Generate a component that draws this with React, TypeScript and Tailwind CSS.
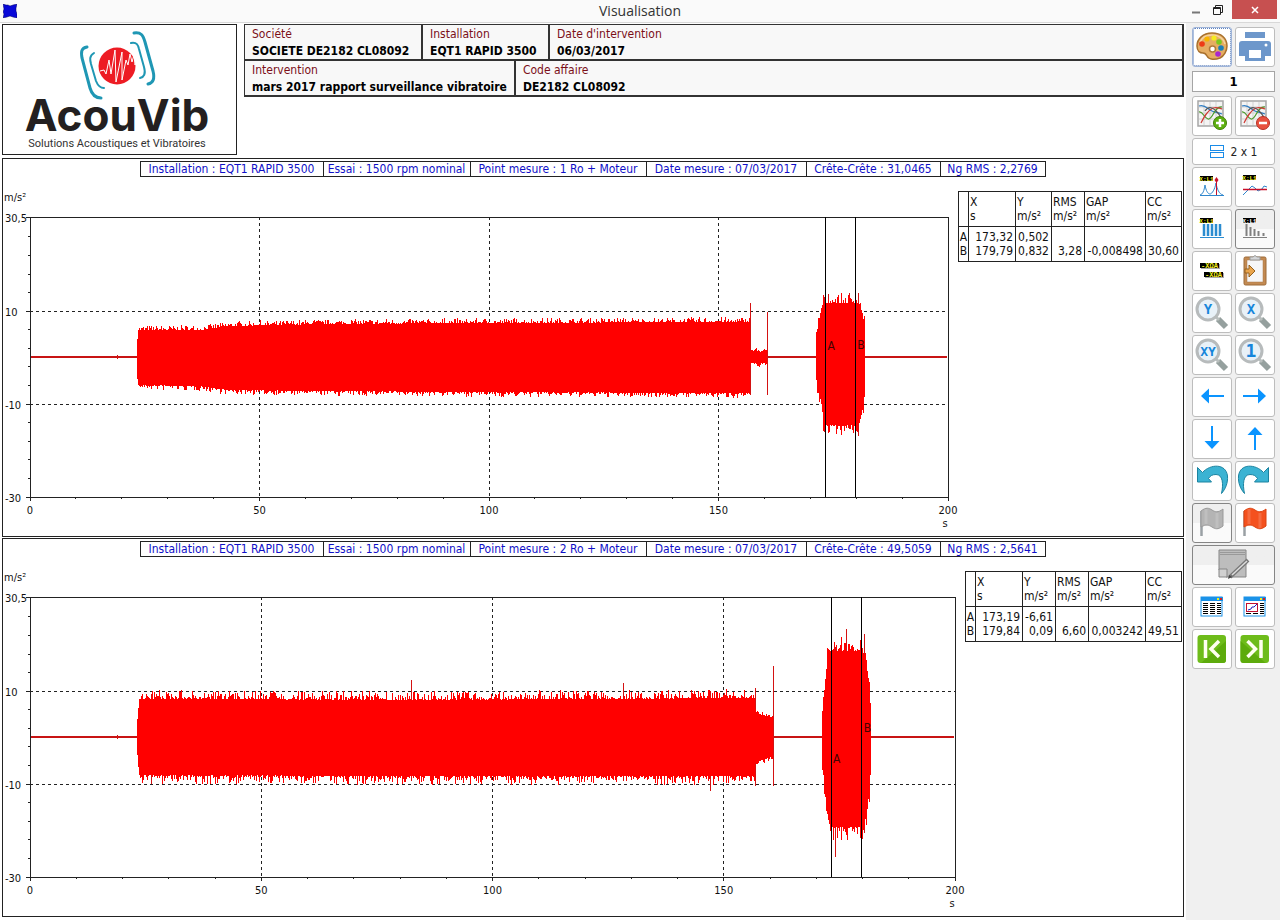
import type { ReactNode } from "react";
import clsx from "clsx";

const UI_FONT = "font-['DejaVu_Sans_Condensed','DejaVu_Sans',sans-serif]";

// Envelope points are [x, top, bottom] in plot units, zero line at ZERO
type Point = [number, number, number];

type Measure = {
  id: string;
  infos: string[];
  width: number;
  noise: number;
  seed: number;
  segments: Point[][];
  spikes: Point[];
  cursors: { name: string; at: number; labelY: number }[];
  columns: { title: string; unit: string; width: string; a: string; b: string }[];
};

const PLOT_HEIGHT = 280;
const ZERO = 141;

const INFO_WIDTHS = ["w-[184px]", "w-[148px]", "w-[177px]", "w-[161px]", "w-[135px]", "w-[106px]"];

const measures: Measure[] = [
  {
    id: "m1",
    infos: [
      "Installation : EQT1 RAPID 3500",
      "Essai : 1500 rpm nominal",
      "Point mesure : 1 Ro + Moteur",
      "Date mesure : 07/03/2017",
      "Crête-Crête : 31,0465",
      "Ng RMS : 2,2769",
    ],
    width: 918,
    noise: 5,
    seed: 7,
    segments: [
      [[107, 122, 158], [108, 113, 168], [170, 113, 169], [200, 109, 173], [300, 107, 174], [450, 106, 175], [720, 105, 176]],
      [[720, 134, 146], [737, 135, 146]],
      [[786, 122, 163], [788, 105, 176], [791, 94, 184], [792, 91, 195], [793, 86, 205], [795, 86, 208], [827, 86, 208], [829, 89, 206], [832, 96, 193], [834, 108, 180], [835, 122, 164]],
    ],
    spikes: [[720, 86, 178], [737, 95, 178], [819, 76, 212], [828, 76, 219], [794, 80, 215], [798, 77, 214], [87, 138, 142]],
    cursors: [
      { name: "A", at: 173.32, labelY: 133 },
      { name: "B", at: 179.79, labelY: 132 },
    ],
    columns: [
      { title: "X", unit: "s", width: "w-[47px]", a: "173,32", b: "179,79" },
      { title: "Y", unit: "m/s²", width: "w-[36px]", a: "0,502", b: "0,832" },
      { title: "RMS", unit: "m/s²", width: "w-[33px]", a: "", b: "3,28" },
      { title: "GAP", unit: "m/s²", width: "w-[61px]", a: "", b: "-0,008498" },
      { title: "CC", unit: "m/s²", width: "w-[36px]", a: "", b: "30,60" },
    ],
  },
  {
    id: "m2",
    infos: [
      "Installation : EQT1 RAPID 3500",
      "Essai : 1500 rpm nominal",
      "Point mesure : 2 Ro + Moteur",
      "Date mesure : 07/03/2017",
      "Crête-Crête : 49,5059",
      "Ng RMS : 2,5641",
    ],
    width: 925,
    noise: 9,
    seed: 23,
    segments: [
      [[107, 122, 158], [109, 102, 178], [400, 103, 179], [725, 101, 179]],
      [[725, 116, 165], [743, 121, 159]],
      [[792, 114, 168], [794, 96, 188], [796, 72, 208], [798, 58, 222], [800, 54, 230], [832, 54, 230], [835, 60, 220], [837, 76, 208], [839, 92, 192], [841, 120, 164]],
    ],
    spikes: [[725, 91, 189], [743, 69, 189], [381, 83, 184], [593, 86, 184], [816, 32, 236], [805, 50, 260], [834, 37, 236], [680, 94, 194], [121, 97, 187], [87, 138, 142]],
    cursors: [
      { name: "A", at: 173.19, labelY: 166 },
      { name: "B", at: 179.84, labelY: 135 },
    ],
    columns: [
      { title: "X", unit: "s", width: "w-[47px]", a: "173,19", b: "179,84" },
      { title: "Y", unit: "m/s²", width: "w-[33px]", a: "-6,61", b: "0,09" },
      { title: "RMS", unit: "m/s²", width: "w-[33px]", a: "", b: "6,60" },
      { title: "GAP", unit: "m/s²", width: "w-[57px]", a: "", b: "0,003242" },
      { title: "CC", unit: "m/s²", width: "w-[36px]", a: "", b: "49,51" },
    ],
  },
];

function createRandom(seed: number) {
  let s = seed;
  return () => {
    s = (s * 16807) % 2147483647;
    return s / 2147483647;
  };
}

// One column per unit: straight interpolation of the envelope plus some noise
function envelopePath(points: Point[], noise: number, random: () => number) {
  const top: string[] = [];
  const bottom: string[] = [];
  for (let i = 0; i < points.length - 1; i++) {
    const [x0, t0, b0] = points[i];
    const [x1, t1, b1] = points[i + 1];
    for (let x = x0; x < x1; x++) {
      const k = (x - x0) / (x1 - x0);
      const t = Math.round(t0 + (t1 - t0) * k - Math.pow(random(), 2.5) * noise);
      const b = Math.round(b0 + (b1 - b0) * k + Math.pow(random(), 2.5) * noise);
      top.push(`L${x} ${t}H${x + 1}`);
      bottom.unshift(`L${x + 1} ${b}H${x}`);
    }
  }
  return `M${points[0][0]} ${ZERO}${top.join("")}${bottom.join("")}Z`;
}

function Plot({ measure }: { measure: Measure }) {
  const random = createRandom(measure.seed);
  const noises = [measure.noise, 4, measure.noise + 5];
  const yTicks = [
    { label: "30,5", at: 0 },
    { label: "10", at: 33.6 },
    { label: "-10", at: 66.8 },
    { label: "-30", at: 100 },
  ];
  const minor = [26, 22, 18, 14, 6, 2, -2, -6, -14, -18, -22, -26].map((v) => ((30.3 - v) / 60.3) * 100);

  return (
    <svg
      role="img"
      aria-label={measure.infos[2]}
      className="min-w-0 flex-1 self-stretch overflow-visible"
      fontSize="11"
      fill="#111"
    >
      <text x="-26" y="-16">m/s²</text>
      <g stroke="#222" shapeRendering="crispEdges">
        <rect x="0" y="0" width="100%" height="100%" fill="none" />
        {yTicks.map((t) => (
          <line key={t.label} x1="-4" x2="0" y1={`${t.at}%`} y2={`${t.at}%`} />
        ))}
        {minor.map((at) => (
          <line key={at} x1="-2" x2="0" y1={`${at}%`} y2={`${at}%`} />
        ))}
        {[0, 5, 10, 15, 20, 25, 30, 35, 40, 45, 50, 55, 60, 65, 70, 75, 80, 85, 90, 95, 100].map((at) => (
          <svg key={at} x={`${at}%`} y="100%" overflow="visible">
            <line x1="0" x2="0" y1="0" y2={at % 25 === 0 ? 4 : 2} />
          </svg>
        ))}
        <g strokeDasharray="3 3">
          {[25, 50, 75].map((at) => (
            <line key={at} x1={`${at}%`} x2={`${at}%`} y1="0" y2="100%" />
          ))}
          <line x1="0" x2="100%" y1="33.6%" y2="33.6%" />
          <line x1="0" x2="100%" y1="66.8%" y2="66.8%" />
        </g>
      </g>

      <svg
        width="100%"
        height="100%"
        viewBox={`0 0 ${measure.width} ${PLOT_HEIGHT}`}
        preserveAspectRatio="none"
        shapeRendering="crispEdges"
      >
        <rect x="1" y={ZERO - 2} width={measure.width - 2} height="2" fill="#c81414" />
        {measure.spikes.map(([x, t, b]) => (
          <rect key={x} x={x} y={t} width="1" height={b - t} fill="#d41212" />
        ))}
        {measure.segments.map((points, i) => (
          <path key={i} d={envelopePath(points, noises[i], random)} fill="#f00" />
        ))}
      </svg>

      {measure.cursors.map((c) => (
        <g key={c.name}>
          <line
            x1={`${c.at / 2}%`}
            x2={`${c.at / 2}%`}
            y1="0"
            y2="100%"
            stroke="#000"
            shapeRendering="crispEdges"
          />
          <text x={`${c.at / 2}%`} dx="2" y={`${(c.labelY / PLOT_HEIGHT) * 100}%`} fill="#400" fontSize="12">
            {c.name}
          </text>
        </g>
      ))}

      {yTicks.map((t) => (
        <text key={t.label} x="-25" y={`${t.at}%`} dy="5">{t.label}</text>
      ))}
      {[0, 50, 100, 150, 200].map((v) => (
        <text key={v} x={`${v / 2}%`} y="100%" dy="17" textAnchor="middle">{v}</text>
      ))}
      <text x="100%" y="100%" dx="-3" dy="30" textAnchor="middle">s</text>
    </svg>
  );
}

function CursorTable({ measure }: { measure: Measure }) {
  return (
    <table className="table-fixed border-collapse text-xs leading-[14px] text-[#111]">
      <thead>
        <tr className="h-[35px]">
          <th className="w-[10px] border border-[#222]" aria-label="Curseur" />
          {measure.columns.map((c) => (
            <th key={c.title} scope="col" className={clsx("border border-[#222] p-0 pl-px text-left align-middle font-normal", c.width)}>
              {c.title}
              <br />
              {c.unit}
            </th>
          ))}
        </tr>
      </thead>
      <tbody>
        <tr>
          <th scope="row" className="border-x border-[#222] p-0 pt-[3px] font-normal">A</th>
          {measure.columns.map((c) => (
            <td key={c.title} className="whitespace-nowrap border-x border-[#222] p-0 pt-[3px] pr-0.5 text-right">{c.a}</td>
          ))}
        </tr>
        <tr>
          <th scope="row" className="border-x border-b border-[#222] p-0 pb-[3px] font-normal">B</th>
          {measure.columns.map((c) => (
            <td key={c.title} className="whitespace-nowrap border-x border-b border-[#222] p-0 pb-[3px] pr-0.5 text-right">{c.b}</td>
          ))}
        </tr>
      </tbody>
    </table>
  );
}

function MeasurePanel({ measure }: { measure: Measure }) {
  return (
    <section className="flex min-h-[300px] flex-1 flex-col border border-[#222] bg-white pt-0.5">
      <ul className="flex justify-center text-xs leading-[14px] text-[#1010c8]">
        {measure.infos.map((info, i) => (
          <li key={info} className={clsx("-ml-px whitespace-nowrap border border-[#222] text-center", INFO_WIDTHS[i])}>
            {info}
          </li>
        ))}
      </ul>
      <div className="flex flex-1 gap-[10px] pr-px pl-[27px]">
        <div className="flex min-w-0 flex-1 pt-10 pb-[39px]">
          <Plot measure={measure} />
        </div>
        <div className="pt-[14px]">
          <CursorTable measure={measure} />
        </div>
      </div>
    </section>
  );
}

function Logo() {
  return (
    <div className="flex h-[131px] w-[235px] shrink-0 items-center justify-center border border-[#222] bg-white">
      <svg viewBox="0 0 233 129" className="h-[129px] w-[233px]" role="img" aria-label="AcouVib Solutions Acoustiques et Vibratoires">
        <g fill="none" stroke="#1f97b4" strokeLinecap="round">
          <path d="M84 22C78 23 78 27 79 33L87 63C89 70 92 73 98 73" strokeWidth="3" />
          <path d="M91 28C86 31 87 35 88 39L93 56C95 61 97 63 101 63" strokeWidth="2" />
          <path d="M131 8C138 7 140 10 142 17L150 46C152 54 150 58 145 59" strokeWidth="3" />
          <path d="M128 18C134 17 135 20 136 24L141 42C143 49 141 52 137 53" strokeWidth="2" />
        </g>
        <circle cx="114" cy="41" r="18.500" fill="#ed1c24" />
        <path
          d="M97 46l4-1 2 4 3-14 2 14 4-24 1 32 6-30 0 28 4-20 2 5 2-11 2 8 2-7 1 10 2-4 1 3 2-2"
          fill="none"
          stroke="#fff"
          strokeWidth="1"
        />
        <text x="114" y="106" textAnchor="middle" fontSize="44" fill="#231f20" className="font-['Inter',sans-serif] font-bold">AcouVib</text>
        <text x="114" y="122" textAnchor="middle" fontSize="11" fill="#333" className="font-['Roboto',sans-serif]">
          Solutions Acoustiques et Vibratoires
        </text>
      </svg>
    </div>
  );
}

function Field({ label, value, className }: { label: string; value: string; className?: string }) {
  return (
    <div className={clsx("whitespace-nowrap border-r-2 border-b-2 border-[#333] px-[7px]", className)}>
      <dt className="text-xs leading-[18px] text-[#7b0f18]">{label}</dt>
      <dd className="text-xs leading-4 font-bold text-black">{value}</dd>
    </div>
  );
}

function Header() {
  return (
    <header className="flex gap-[7px]">
      <Logo />
      <dl className="flex min-w-0 flex-1 flex-col self-start border-t border-l border-[#333] bg-[#f8f8f8]">
        <div className="flex">
          <Field label="Société" value="SOCIETE DE2182 CL08092" className="min-w-[178px]" />
          <Field label="Installation" value="EQT1 RAPID 3500" className="min-w-[127px]" />
          <Field label="Date d'intervention" value="06/03/2017" className="flex-1" />
        </div>
        <div className="flex">
          <Field label="Intervention" value="mars 2017 rapport surveillance vibratoire" />
          <Field label="Code affaire" value="DE2182 CL08092" className="flex-1" />
        </div>
      </dl>
    </header>
  );
}

/* ---------- Toolbar ---------- */

type ToolProps = { label: string; children: ReactNode; variant?: "focus" | "disabled"; wide?: boolean };

function Tool({ label, children, variant, wide }: ToolProps) {
  return (
    <button
      type="button"
      aria-label={label}
      title={label}
      className={clsx(
        "flex h-10 items-center justify-center rounded-[3px] border",
        wide && "col-span-2",
        !variant && "border-[#bdbdbd] bg-white",
        variant === "focus" && "border-[#9fb4d8] bg-white outline-1 -outline-offset-2 outline-dotted outline-[#5f82bd]",
        variant === "disabled" && "border-[#858585] bg-linear-to-b from-[#efefef] from-50% to-[#fafafa] to-50%",
      )}
    >
      <svg viewBox="0 0 40 40" className="size-10 shrink-0" aria-hidden="true">
        {children}
      </svg>
    </button>
  );
}

function Badge({ x, y, text = "X:L1", w = 13, size = 6, color = "#f5ee1e" }: { x: number; y: number; text?: string; w?: number; size?: number; color?: string }) {
  return (
    <g>
      <rect x={x} y={y} width={w} height="5" fill="#000" />
      <text x={x + w / 2} y={y + 5} textAnchor="middle" fontSize={size} fontWeight="bold" fill={color} className="font-['Liberation_Mono',monospace]">
        {text}
      </text>
    </g>
  );
}

function PaletteIcon() {
  return (
    <>
      <path
        d="M20 6C11 6 5 12 5 19c0 5 3 7 6 7 2 0 3 1 4 3 2 4 8 4 13 2 4-2 7-7 7-12C35 11 29 6 20 6Z"
        fill="#e5ad62"
        stroke="#a8702c"
        strokeWidth="1.500"
      />
      <path d="M8 15c2-5 7-7 12-7 7 0 12 4 13 9" fill="none" stroke="#f4d3a0" strokeWidth="1.500" />
      <circle cx="20.500" cy="22" r="3" fill="#fff" stroke="#b07a3a" strokeWidth="1.500" />
      <circle cx="10" cy="17" r="2.800" fill="#ee3b16" />
      <circle cx="15" cy="12" r="2.600" fill="#f7b500" />
      <circle cx="22" cy="11" r="2.600" fill="#f5ea1c" />
      <circle cx="27" cy="15" r="2.800" fill="#7bc81e" />
      <circle cx="29" cy="21" r="2.800" fill="#1c7fb8" />
      <circle cx="26" cy="27" r="2.800" fill="#a926cf" />
    </>
  );
}

function PrinterIcon() {
  return (
    <>
      <rect x="10" y="5" width="20" height="6" fill="#6d97cb" />
      <path d="M7 14h26q3 0 3 3v12H4V17q0-3 3-3Z" fill="#6d97cb" />
      <rect x="10" y="22" width="20" height="12" fill="#6d97cb" />
      <rect x="14" y="23" width="12" height="8" fill="#fff" />
      <circle cx="31" cy="18" r="1.500" fill="#fff" />
    </>
  );
}

function CurvesIcon({ remove }: { remove?: boolean }) {
  return (
    <>
      <rect x="6" y="5" width="25" height="25" fill="#f4f4f4" stroke="#a6a6a6" strokeWidth="1.500" />
      <path d="M12 6v23M18 6v23M24 6v23M7 11h23M7 17h23M7 23h23" stroke="#d2d2d2" />
      <g fill="none" strokeWidth="1.200">
        <path d="M7 10c5-2 8 2 11 4s6 2 12 4" stroke="#2d7cc4" />
        <path d="M7 16c4-1 5 6 9 7 5 1 6-13 14-12" stroke="#4b9a2b" />
        <path d="M9 27c3-6 6-12 12-15 4-1 6 0 9 1" stroke="#cf3a34" />
        <path d="M13 15c4-6 10-4 17 8" stroke="#555" />
      </g>
      <circle cx="28" cy="27" r="6.500" fill={remove ? "#e8513f" : "#5eb010"} stroke={remove ? "#b83025" : "#3f8106"} />
      <path d={remove ? "M24 27h8" : "M24 27h8M28 23v8"} stroke="#fff" strokeWidth="2.500" />
    </>
  );
}

function MagnifierIcon({ text, size = 14 }: { text: string; size?: number }) {
  return (
    <>
      <path d="M26 26l8 8" stroke="#95a09e" strokeWidth="6" />
      <path d="M23 23l4 4" stroke="#b9bfbe" strokeWidth="3" />
      <circle cx="16" cy="16" r="11" fill="#e8f1f8" stroke="#b7bbbc" strokeWidth="3" />
      <text
        x="16"
        y={size > 16 ? 22 : 21}
        textAnchor="middle"
        fontSize={size}
        fontWeight="bold"
        fill="#1685db"
        className="font-['DejaVu_Sans_Mono',monospace]"
      >
        {text}
      </text>
    </>
  );
}

function ArrowIcon({ angle }: { angle: number }) {
  return (
    <g transform={`rotate(${angle} 20 19)`} fill="#0a94ff">
      <rect x="15" y="18" width="17" height="2" />
      <path d="M9 19l8-7.500v15z" />
    </g>
  );
}

function UndoIcon() {
  return (
    <path
      d="M5.500 6.500l5 5C18 3 34 2 35.500 15c.5 7-2 13-6 17.500 2-9 1.500-19-5.500-19-4 0-6 1.500-7.500 4l3 3.500H5.500Z"
      fill="#3bb3d3"
      stroke="#1b83a0"
    />
  );
}

function FlagIcon({ fill, stroke }: { fill: string; stroke: string }) {
  return (
    <>
      <path d="M9.500 8v25" stroke="#9aa0a4" strokeWidth="2.500" />
      <path d="M9 8c5-4 8-3 11-1s6 3 11-1v17c-5 4-8 3-11 1s-6-3-11 0Z" fill={fill} stroke={stroke} />
      <path d="M14 6v15M25 10v15" stroke="#fff" strokeWidth="3" opacity="0.150" />
    </>
  );
}

function WindowIcon({ chart }: { chart?: boolean }) {
  return (
    <>
      <rect x="9" y="10" width="21" height="19" fill="#fff" stroke="#1a92e8" />
      <rect x="9" y="10" width="22" height="4" fill="#1a92e8" />
      <rect x="25" y="11" width="2" height="2" fill="#f5ee1e" />
      <rect x="28" y="11" width="2" height="2" fill="#d62020" />
      <path
        d="M11 16.500h5M18 16.500h5M25 16.500h4M11 18.500h5M18 18.500h5M25 18.500h4M11 20.500h5M18 20.500h5M25 20.500h4M11 22.500h5M18 22.500h5M25 22.500h4M11 24.500h5M18 24.500h5M25 24.500h4M11 26.500h5M18 26.500h5M25 26.500h4"
        stroke="#000"
      />
      {chart && (
        <>
          <rect x="11.500" y="16.500" width="11" height="8" fill="#fff" stroke="#c01030" />
          <path d="M13 23l3-1 1-2 2 0 3-3" fill="none" stroke="#2020c0" />
        </>
      )}
    </>
  );
}

function EndIcon({ last }: { last?: boolean }) {
  return (
    <g transform={last ? "matrix(-1 0 0 1 39.500 0)" : undefined}>
      <rect x="5.500" y="6" width="28.500" height="28" rx="3" fill="#6ebc1a" />
      <path d="M34 12v19a3 3 0 0 1-3 3H9Z" fill="#5dab0c" />
      <path d="M13.500 11v18M27 12l-8 8 8 8" fill="none" stroke="#fffff0" strokeWidth="3.500" />
    </g>
  );
}

function Toolbar() {
  return (
    <aside className="grid w-[94px] shrink-0 grid-cols-2 content-start gap-x-[3px] gap-y-0.5 bg-[#f0f0f0] pt-1 pr-[5px] pl-[6px]">
      <Tool label="Couleurs" variant="focus"><PaletteIcon /></Tool>
      <Tool label="Imprimer"><PrinterIcon /></Tool>
      <input
        aria-label="Page"
        defaultValue="1"
        className="col-span-2 my-0.5 h-[21px] w-full border border-[#a5a5a5] bg-white text-center text-[13px] font-bold text-black"
      />
      <Tool label="Ajouter une courbe"><CurvesIcon /></Tool>
      <Tool label="Supprimer une courbe"><CurvesIcon remove /></Tool>
      <button type="button" className="col-span-2 flex h-[27px] items-center justify-center gap-[7px] rounded-[3px] border border-[#bdbdbd] bg-white text-xs text-[#222]">
        <svg viewBox="0 0 14 14" className="size-[14px]" fill="#fff" stroke="#1a8ce8" aria-hidden="true">
          <rect x="0.500" y="0.500" width="13" height="5" />
          <rect x="0.500" y="7.500" width="13" height="5" />
        </svg>
        2 x 1
      </button>

      <Tool label="Curseur crête">
        <Badge x={8} y={9} />
        <path d="M8 28c3-1 4-4 5-10 1 6 3 9 5 9s5-5 6-11c1 6 3 11 7 12" fill="none" stroke="#2f86cc" />
        <path d="M8 28.500h24" stroke="#2f86cc" />
        <path d="M24.500 12v16" stroke="#c8102a" />
        <path d="M24.500 10l2 3-2 3-2-3z" fill="#c8102a" />
      </Tool>
      <Tool label="Curseur ligne">
        <Badge x={8} y={8} />
        <path d="M8 28l4-4 5-5 3 2 3 3 4-2 2-3 3 1" fill="none" stroke="#2f86cc" />
        <path d="M8 22.500h24" stroke="#c8102a" strokeWidth="1.500" />
      </Tool>
      <Tool label="Curseur harmonique">
        <Badge x={8} y={9} />
        <path d="M12 15v12M16 15v12M20 15v12M24 15v12M28 15v12" stroke="#2b8cd0" strokeWidth="2.500" />
        <path d="M8 28.500h24" stroke="#2b8cd0" />
      </Tool>
      <Tool label="Curseur décroissance" variant="disabled">
        <Badge x={8} y={9} color="#fff" />
        <path d="M11.500 15v12M15.500 18v9M19.500 20v7M23.500 22v5M28.500 24v3" stroke="#808080" strokeWidth="2" />
        <path d="M8 28.500h24" stroke="#808080" />
      </Tool>
      <Tool label="Etiquettes">
        <rect x="9" y="13" width="19" height="5" fill="#aaa" />
        <Badge x={8} y={12} w={19} size={7} text="-XΩA" />
        <rect x="13" y="22" width="19" height="5" fill="#aaa" />
        <Badge x={12} y={21} w={19} size={7} text="-XΩA" />
      </Tool>
      <Tool label="Copier">
        <rect x="9" y="6" width="22" height="28" rx="1.500" fill="#c38a52" stroke="#9c6a38" />
        <rect x="12" y="9" width="16" height="22" fill="#f6f6f8" stroke="#a8794a" strokeWidth="0.500" />
        <path d="M15 9V6h3q2-3 4 0h3v3z" fill="#d4d6d8" stroke="#999" />
        <path d="M10 18h4v-4l6 6-6 6v-4h-4z" fill="#e9a44c" stroke="#94601f" />
      </Tool>
      <Tool label="Zoom Y"><MagnifierIcon text="Y" /></Tool>
      <Tool label="Zoom X"><MagnifierIcon text="X" /></Tool>
      <Tool label="Zoom XY"><MagnifierIcon text="XY" size={13} /></Tool>
      <Tool label="Zoom 1"><MagnifierIcon text="1" size={18} /></Tool>
      <Tool label="Gauche"><ArrowIcon angle={0} /></Tool>
      <Tool label="Droite"><ArrowIcon angle={180} /></Tool>
      <Tool label="Bas"><ArrowIcon angle={-90} /></Tool>
      <Tool label="Haut"><ArrowIcon angle={90} /></Tool>
      <Tool label="Annuler"><UndoIcon /></Tool>
      <Tool label="Rétablir"><g transform="matrix(-1 0 0 1 39 0)"><UndoIcon /></g></Tool>
      <Tool label="Retirer le repère" variant="disabled"><FlagIcon fill="#b4b4b4" stroke="#999" /></Tool>
      <Tool label="Poser un repère"><FlagIcon fill="#f4511e" stroke="#dc4310" /></Tool>
      <Tool label="Commentaire" variant="disabled" wide>
        <path d="M5 5h27v27H12l-7-7Z" fill="#bdbdbd" stroke="#858585" />
        <path d="M6 7.500h25M6 9.500h25" stroke="#999" />
        <path d="M5 24h8v8H5Z" fill="#d0d0d0" stroke="#858585" />
        <path d="M16 32l18-17" stroke="#777" strokeWidth="4" />
        <path d="M18 30l15-14" stroke="#ddd" strokeWidth="1.500" />
        <path d="M14 34l1-4 3 2z" fill="#444" />
      </Tool>
      <Tool label="Tableau"><WindowIcon /></Tool>
      <Tool label="Tableau et courbe"><WindowIcon chart /></Tool>
      <Tool label="Premier"><EndIcon /></Tool>
      <Tool label="Dernier"><EndIcon last /></Tool>
    </aside>
  );
}

function TitleBar() {
  return (
    <div className="relative flex h-[23px] items-center justify-center border-b border-[#d8d8d8] bg-[#fafafa]">
      <h1 className="font-['Open_Sans','Noto_Sans',sans-serif] text-sm text-[#333]">Visualisation</h1>
      <svg viewBox="0 0 14 14" className="absolute top-1 left-[3px] size-[14px]" aria-hidden="true">
        <path d="M0 0l3 1 2 0 2 1 3-1 4-1-1 4 0 3 1 3 0 4-4-1-3-1-3 1-4 1 1-4-1-2 1-3z" fill="#0808d8" stroke="#000060" strokeWidth="0.500" />
      </svg>
      <div className="absolute top-0 right-[3px] flex h-[19px] items-center">
        <button type="button" aria-label="Réduire" className="flex h-full w-[26px] items-center pl-1">
          <svg viewBox="0 0 10 10" className="size-[10px]" aria-hidden="true"><path d="M1 7.500h8" stroke="#777" strokeWidth="2" /></svg>
        </button>
        <button type="button" aria-label="Restaurer" className="flex h-full w-[19px] items-center">
          <svg viewBox="0 0 10 10" className="size-[10px]" fill="none" stroke="#222" aria-hidden="true">
            <path d="M2.500 2.500V0.500h7v7h-2" />
            <path d="M0.500 2.500h7v7h-7zM0.500 3.500h7" />
          </svg>
        </button>
        <button type="button" aria-label="Fermer" className="flex h-full w-[45px] items-center justify-center bg-[#c75050]">
          <svg viewBox="0 0 8 8" className="size-2" aria-hidden="true"><path d="M1 1l6 6M7 1l-6 6" stroke="#fff" strokeWidth="1.500" /></svg>
        </button>
      </div>
    </div>
  );
}

export default function App() {
  return (
    <div className={clsx("flex min-h-screen flex-col bg-white", UI_FONT)}>
      <TitleBar />
      <div className="flex flex-1">
        <main className="flex min-w-0 flex-1 flex-col pt-px pr-0.5 pb-[3px] pl-0.5">
          <Header />
          <div className="mt-[3px] flex flex-1 flex-col gap-px">
            {measures.map((m) => (
              <MeasurePanel key={m.id} measure={m} />
            ))}
          </div>
        </main>
        <Toolbar />
      </div>
    </div>
  );
}
